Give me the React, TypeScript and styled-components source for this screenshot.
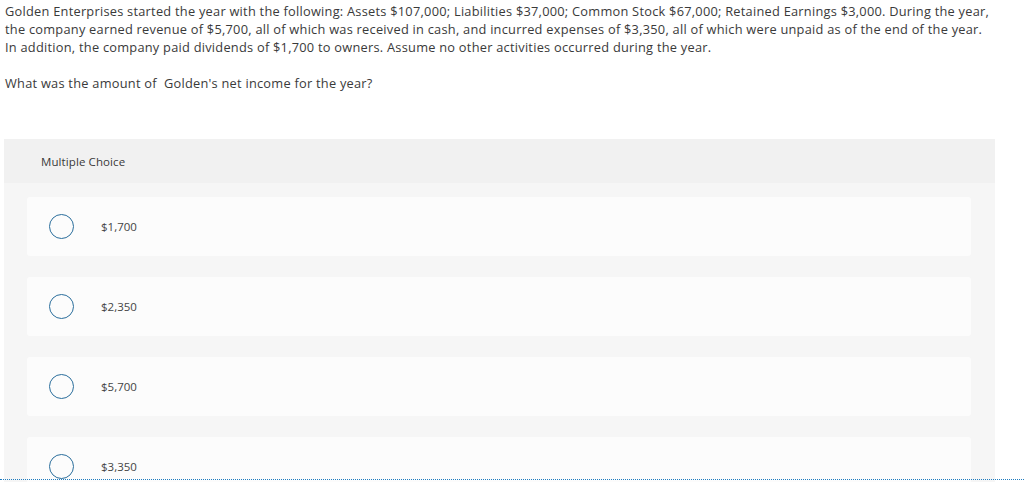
import React, { FC } from 'react'
import styled, { createGlobalStyle } from 'styled-components';

const GlobalStyle = createGlobalStyle`
    html, body {
        margin: 0;
        padding: 0;
        background: #fff;
    }
    body {
        font-family: "Open Sans", "Liberation Sans", Arial, sans-serif;
        color: #333;
    }
`;

const Page = styled.div`
    position: relative;
    height: 482px;
    overflow: hidden;

    &::after {
        content: '';
        position: absolute;
        left: 0;
        right: 0;
        top: 479px;
        border-top: 1px dotted #1f7cc0;
    }
`;

const Prompt = styled.div`
    padding: 2px 0 0 5px;
    font-size: 12.8px;
    letter-spacing: 0.25px;
    line-height: 18px;
    color: #3a3a3a;

    & p {
        margin: 0 0 18px;
        white-space: nowrap;
    }
`;

const Panel = styled.section`
    margin: 47px 29px 0 4px;
    background: #f6f6f6;
`;

const PanelHeader = styled.div`
    height: 44px;
    display: flex;
    align-items: center;
    padding-left: 37px;
    background: #f1f1f1;
    font-size: 11.5px;
    letter-spacing: 0.1px;
    color: #3a3a3a;
`;

const OptionList = styled.div`
    display: flex;
    flex-direction: column;
    gap: 21px;
    padding: 14px 24px 20px 23px;
`;

const OptionCard = styled.label`
    display: flex;
    align-items: center;
    height: 59px;
    padding-left: 22px;
    background: #fcfcfc;
    border-radius: 3px;
    cursor: pointer;
`;

const Radio = styled.span`
    box-sizing: border-box;
    width: 25px;
    height: 25px;
    border-radius: 50%;
    border: 1.5px solid #2a6e9c;
    flex-shrink: 0;
`;

const OptionText = styled.span`
    margin-left: 27px;
    font-size: 11.5px;
    color: #444;
`;

const options = ['$1,700', '$2,350', '$5,700', '$3,350'];

const Option: FC<{ label: string }> = ({ label }) => (
    <OptionCard>
        <Radio />
        <OptionText>{label}</OptionText>
    </OptionCard>
)

const App: FC = () => {
    return (
        <Page>
            <GlobalStyle />
            <Prompt>
                <p>
                    Golden Enterprises started the year with the following: Assets $107,000; Liabilities $37,000; Common Stock $67,000; Retained Earnings $3,000. During the year,<br />
                    the company earned revenue of $5,700, all of which was received in cash, and incurred expenses of $3,350, all of which were unpaid as of the end of the year.<br />
                    In addition, the company paid dividends of $1,700 to owners. Assume no other activities occurred during the year.
                </p>
                <p>What was the amount of&nbsp; Golden's net income for the year?</p>
            </Prompt>
            <Panel>
                <PanelHeader>Multiple Choice</PanelHeader>
                <OptionList>
                    {options.map(o => <Option key={o} label={o} />)}
                </OptionList>
            </Panel>
        </Page>
    )
}

export default App
